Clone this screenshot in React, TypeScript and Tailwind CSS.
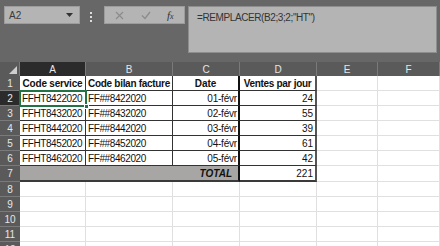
import React from "react";

const font = { fontFamily: '"Liberation Sans", Arial, sans-serif' };

const rows: { a: string; b: string; c: string; d: string }[] = [
  { a: "FFHT8422020", b: "FF##8422020", c: "01-févr", d: "24" },
  { a: "FFHT8432020", b: "FF##8432020", c: "02-févr", d: "55" },
  { a: "FFHT8442020", b: "FF##8442020", c: "03-févr", d: "39" },
  { a: "FFHT8452020", b: "FF##8452020", c: "04-févr", d: "61" },
  { a: "FFHT8462020", b: "FF##8462020", c: "05-févr", d: "42" },
];

function RowHead({ n, sel }: { n: number; sel?: boolean }) {
  return (
    <div
      className={
        "flex items-center justify-center border-b border-[#7a7a7a] text-[10px] " +
        (sel ? "bg-[#2b2b2b] text-[#e8e8e8]" : "bg-[#5a5a5a] text-[#e6e6e6]")
      }
    >
      {n}
    </div>
  );
}

const empty = "border-r border-b border-[#e0e0e0] bg-white";

export default function App() {
  return (
    <div
      className="w-[440px] h-[246px] bg-[#676767] overflow-hidden flex flex-col text-[#111]"
      style={font}
    >
      <div className="h-[2px] bg-[#525252]" />
      <div className="flex items-start mt-[6px] h-[47px]">
        <div className="ml-[4px] w-[76px] h-[18px] bg-[#b4b4b4] border border-[#9c9c9c] flex items-center justify-between pl-[4px] pr-[6px] text-[10px] text-[#3a3a3a]">
          <span>A2</span>
          <svg width="7" height="4" viewBox="0 0 7 4">
            <path d="M0 0H7L3.5 4Z" fill="#333" />
          </svg>
        </div>
        <div className="ml-[10px] mt-[6px] flex flex-col gap-[2px]">
          <div className="w-[2px] h-[2px] bg-[#dcdcdc]" />
          <div className="w-[2px] h-[2px] bg-[#dcdcdc]" />
          <div className="w-[2px] h-[2px] bg-[#dcdcdc]" />
        </div>
        <div className="ml-[12px] w-[81px] h-[18px] bg-[#b4b4b4] border border-[#9c9c9c] flex items-center">
          <svg className="ml-[10px]" width="9" height="9" viewBox="0 0 9 9">
            <path d="M1 1L8 8M8 1L1 8" stroke="#8c8c8c" strokeWidth="1.2" />
          </svg>
          <svg className="ml-[17px]" width="10" height="9" viewBox="0 0 10 9">
            <path d="M1 4.5L4 7.5L9 1" stroke="#8c8c8c" strokeWidth="1.3" fill="none" />
          </svg>
          <span
            className="ml-[16px] text-[11px] italic text-[#333]"
            style={{ fontFamily: '"Liberation Serif", serif' }}
          >
            f<span className="text-[8px]">x</span>
          </span>
        </div>
        <div className="ml-[3px] w-[249px] h-[47px] bg-[#b4b4b4] border border-[#8e8e8e] pl-[8px] pt-[3px] text-[10px] tracking-[-0.4px] text-[#333]">
          =REMPLACER(B2;3;2;"HT")
        </div>
      </div>

      <div className="mt-[9px] grid grid-cols-[20px_66px_87px_67px_77px_61px_1fr] grid-rows-[14px_15px_15px_15px_15px_15px_15px_16px_15px_15px_15px_15px_15px] relative">
        {/* header row */}
        <div className="bg-[#5a5a5a] relative border-r border-[#7a7a7a]">
          <svg className="absolute right-[2px] bottom-[2px]" width="8" height="8" viewBox="0 0 8 8">
            <path d="M8 0V8H0Z" fill="#cfcfcf" />
          </svg>
        </div>
        <div className="bg-[#2b2b2b] text-[#e8e8e8] text-[10px] flex items-center justify-center border-r border-[#7a7a7a]">A</div>
        {["B", "C", "D", "E", "F"].map((l) => (
          <div
            key={l}
            className="bg-[#5a5a5a] text-[#e6e6e6] text-[10px] flex items-center justify-center border-r border-[#7a7a7a]"
          >
            {l}
          </div>
        ))}

        {/* row 1 */}
        <RowHead n={1} />
        <div className="bg-white border-r border-b border-[#333] text-[10px] font-bold tracking-[-0.2px] flex items-center justify-center whitespace-nowrap">Code service</div>
        <div className="bg-white border-r border-b border-[#333] text-[10px] font-bold tracking-[-0.3px] flex items-center justify-center whitespace-nowrap">Code bilan facture</div>
        <div className="bg-white border-r-2 border-b border-[#111] border-b-[#333] text-[10px] font-bold flex items-center justify-center whitespace-nowrap">Date</div>
        <div className="bg-white border-r-2 border-r-[#555] border-b border-b-[#333] text-[10px] font-bold tracking-[-0.3px] flex items-center justify-center whitespace-nowrap">Ventes par jour</div>
        <div className={empty} />
        <div className={empty} />

        {rows.map((r, i) => (
          <React.Fragment key={i}>
            <RowHead n={i + 2} sel={i === 0} />
            <div className="bg-white border-r border-b border-[#333] text-[10px] tracking-[-0.4px] flex items-center pl-[2px] whitespace-nowrap">{r.a}</div>
            <div className="bg-white border-r border-b border-[#333] text-[10px] tracking-[-0.4px] flex items-center pl-[2px] whitespace-nowrap">{r.b}</div>
            <div className="bg-white border-r-2 border-b border-[#111] border-b-[#333] text-[10px] tracking-[-0.2px] flex items-center justify-end pr-[1px] whitespace-nowrap">{r.c}</div>
            <div className="bg-white border-r-2 border-r-[#555] border-b border-b-[#333] text-[10px] flex items-center justify-end pr-[2px]">{r.d}</div>
            <div className={empty} />
            <div className={empty} />
          </React.Fragment>
        ))}

        {/* row 7 */}
        <RowHead n={7} />
        <div className="col-span-3 bg-[#a7a6a4] border-r-2 border-r-[#111] border-b-2 border-b-[#3a3a3a] text-[10px] font-bold italic flex items-center justify-end pr-[6px]">TOTAL</div>
        <div className="bg-white border-r-2 border-r-[#555] border-b-2 border-b-[#3a3a3a] text-[10px] flex items-center justify-end pr-[2px]">221</div>
        <div className={empty} />
        <div className={empty} />

        {[8, 9, 10, 11, 12].map((n) => (
          <React.Fragment key={n}>
            <RowHead n={n} />
            <div className={empty} />
            <div className={empty} />
            <div className={empty} />
            <div className={empty} />
            <div className={empty} />
            <div className={empty} />
          </React.Fragment>
        ))}

        {/* selection on A2 */}
        <div className="absolute left-[19px] top-[28px] w-[68px] h-[17px] border-2 border-[#217346] pointer-events-none" />
        <div className="absolute left-[84px] top-[42px] w-[5px] h-[5px] bg-[#217346] border border-white pointer-events-none" />
      </div>
    </div>
  );
}
